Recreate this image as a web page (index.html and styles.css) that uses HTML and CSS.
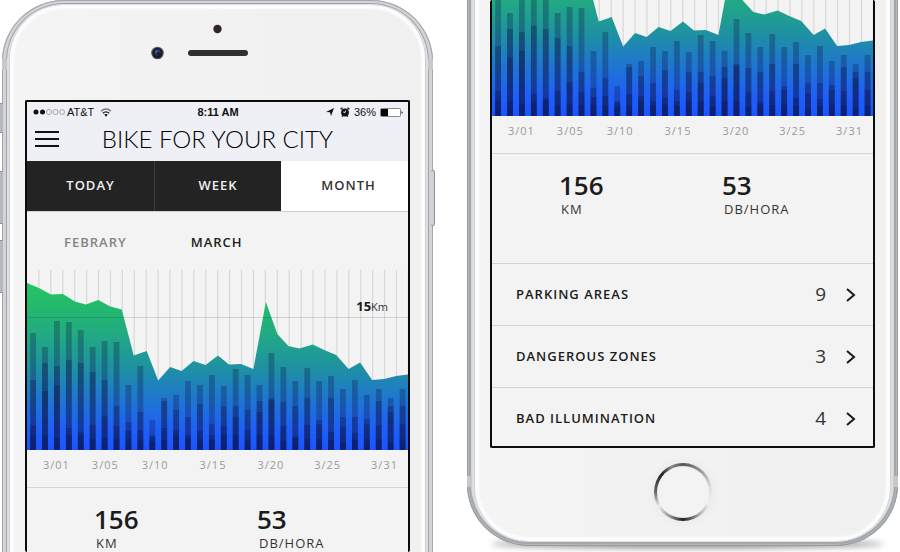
FILE: index.html
```html
<!DOCTYPE html>
<html lang="en">
<head>
<meta charset="utf-8">
<title>Bike for your city</title>
<link rel="stylesheet" href="styles.css">
</head>
<body>
<main class="stage">
  <section class="phone phone-top">
    <i class="side mute"></i><i class="side vol-up"></i><i class="side vol-down"></i><i class="side power"></i>
    <i class="antenna left"></i><i class="antenna right"></i>
    <div class="forehead">
      <svg class="sensors" viewBox="0 0 100 50" aria-hidden="true">
        <circle cx="67.500" cy="9" r="4.200" fill="#2e2726"/>
        <circle cx="7.500" cy="33" r="6.300" fill="#585a60"/>
        <circle cx="7.500" cy="33" r="5.200" fill="#191b22"/>
        <circle cx="7.500" cy="32.500" r="3" fill="#263f74"/>
        <circle cx="8.500" cy="33.500" r="1.500" fill="#11182a"/>
        <circle cx="6.500" cy="31.500" r="1" fill="#4e73ad"/>
        <rect x="38" y="30" width="60" height="6" rx="3" fill="#303031"/>
      </svg>
    </div>
    <div class="screen">
      <header class="topbar">
        <div class="status">
          <span class="carrier">
            <svg class="signal" viewBox="0 0 32 8" aria-hidden="true"><g stroke-width=".7"><circle cx="3" cy="4" r="2.500" fill="#111"/><circle cx="9.500" cy="4" r="2.500" fill="#111"/><g fill="none" stroke="#888"><circle cx="16" cy="4" r="2.500"/><circle cx="22.500" cy="4" r="2.500"/><circle cx="29" cy="4" r="2.500"/></g></g></svg>
            <span>AT&amp;T</span>
            <svg class="wifi" viewBox="0 0 12 9" aria-hidden="true"><g fill="none" stroke-width="1.300"><path d="M1 3.300Q6-1.200 11 3.300" stroke="#777"/><path d="M2.800 5.300Q6 2.400 9.200 5.300" stroke="#222"/></g><path d="M4.200 6.600Q6 5.200 7.800 6.600L6 8.700z" fill="#111"/></svg>
          </span>
          <time>8:11 AM</time>
          <span class="power-info">
            <svg class="arrow" viewBox="0 0 8 8" aria-hidden="true"><path d="M8 0L5 8 4 4.200 0 4z" fill="#111"/></svg>
            <svg class="alarm" viewBox="0 0 10 10" aria-hidden="true"><circle cx="5" cy="5.500" r="3.900" fill="#111"/><path d="M.6 2.300L2.500.7M9.400 2.300L7.500.7M2 9.600l1-1M8 9.600l-1-1" stroke="#111" stroke-width="1.300"/><path d="M5.700 3.500L4.700 5.800 3.300 5" fill="none" stroke="#fff"/></svg>
            <span>36%</span>
            <svg class="battery" viewBox="0 0 23 9" aria-hidden="true"><rect x=".5" y=".5" width="20" height="8" rx="1" fill="#fff" stroke="#888"/><rect x="1" y="1" width="7" height="7" fill="#080808"/><path d="M21.500 3v3L23 4.500z" fill="#333"/></svg>
          </span>
        </div>
        <div class="titlebar">
          <button class="menu" type="button" aria-label="Menu"><i></i><i></i><i></i></button>
          <h1>BIKE FOR YOUR CITY</h1>
        </div>
      </header>
      <nav class="tabs">
        <button type="button">TODAY</button>
        <button type="button">WEEK</button>
        <button type="button" class="active">MONTH</button>
      </nav>
      <div class="months">
        <a href="#february">FEBRARY</a>
        <a href="#march" class="current">MARCH</a>
      </div>
      <figure class="chart"><figcaption><b>15</b>Km</figcaption></figure>
      <div class="axis"><span>3/01</span><span>3/05</span><span>3/10</span><span>3/15</span><span>3/20</span><span>3/25</span><span>3/31</span></div>
      <dl class="stats">
        <div><dd>156</dd><dt>KM</dt></div>
        <div><dd>53</dd><dt>DB/HORA</dt></div>
      </dl>
    </div>
  </section>

  <section class="phone phone-bottom">
    <i class="antenna left"></i><i class="antenna right"></i>
    <div class="screen">
      <figure class="chart"></figure>
      <div class="axis"><span>3/01</span><span>3/05</span><span>3/10</span><span>3/15</span><span>3/20</span><span>3/25</span><span>3/31</span></div>
      <dl class="stats">
        <div><dd>156</dd><dt>KM</dt></div>
        <div><dd>53</dd><dt>DB/HORA</dt></div>
      </dl>
      <ul class="reports">
        <li><a href="#parking"><span>PARKING AREAS</span><b>9</b><svg viewBox="0 0 10 14" aria-hidden="true"><path d="M1 1l7 6-7 6"/></svg></a></li>
        <li><a href="#danger"><span>DANGEROUS ZONES</span><b>3</b><svg viewBox="0 0 10 14" aria-hidden="true"><path d="M1 1l7 6-7 6"/></svg></a></li>
        <li><a href="#light"><span>BAD ILLUMINATION</span><b>4</b><svg viewBox="0 0 10 14" aria-hidden="true"><path d="M1 1l7 6-7 6"/></svg></a></li>
      </ul>
    </div>
    <div class="chin"><button class="home" type="button" aria-label="Home"></button></div>
  </section>
</main>
<script src="chart.js"></script>
</body>
</html>
```
FILE: styles.css
```css
* { box-sizing: border-box; }
body {
  margin: 0;
  background: #fff;
  color: #1c1c1c;
  font-family: "Open Sans", "Noto Sans", sans-serif;
  font-size: 13px;
}
h1, dl, dd, dt, ul, figure { margin: 0; padding: 0; }
button { font: inherit; border: 0; padding: 0; background: none; color: inherit; }
a { color: inherit; text-decoration: none; }
svg { display: block; }

.stage {
  display: grid;
  grid-template-columns: 1fr 1fr;
  gap: 34px;
  height: 100vh;
  padding: 0 2px;
  overflow: hidden;
}
.phone {
  position: relative;
  isolation: isolate;
  display: flex;
  flex-direction: column;
  min-height: 0;
  padding: 0 23px;
}
/* The case runs on past the edge of the window. */
.phone::before {
  content: "";
  position: absolute;
  z-index: -1;
  left: 0;
  right: 0;
  background: linear-gradient(90deg, #f4f4f4, #f0f0f0);
}
.phone-top::before {
  top: 0;
  bottom: -100px;
  border-radius: 62px;
  box-shadow:
    inset 0 0 0 1px #a4a7ab,
    inset 0 -1px 0 4px #d2d4d8,
    inset 0 -1px 0 5px #a1a4a9,
    inset 0 -2px 0 7px #dedfe1,
    inset 0 -3px 0 8px #d0d1d3,
    inset 0 -3px 2px 12px #fcfcfc;
}
.phone-bottom {
  justify-content: flex-end;
  margin-bottom: 6px;
}
.phone-bottom::before {
  top: -100px;
  bottom: 0;
  border-radius: 62px;
  box-shadow:
    inset 0 0 0 1px #989ca1,
    inset 0 0 0 2px #b3b6ba,
    inset 0 0 0 4px #a3a8ad,
    inset 0 1px 0 5px #d4d6da,
    inset 0 2px 0 7px #dedfe1,
    inset 0 3px 0 8px #d0d1d3,
    inset 0 3px 2px 12px #fcfcfc;
}
.phone-bottom::after {
  content: "";
  position: absolute;
  z-index: -2;
  left: 24px;
  right: 14px;
  bottom: -2px;
  height: 8px;
  border-radius: 50%;
  background: #888;
  filter: blur(3px);
}
.side { position: absolute; width: 4px; background: #b4b7bc; border: 1px solid #8f9297; }
.mute, .vol-up, .vol-down { left: -3px; border-left: 0; border-right: 0; }
.mute { top: 103px; height: 30px; }
.vol-up { top: 171px; height: 53px; }
.vol-down { top: 240px; height: 53px; }
.power { right: -2px; top: 170px; height: 56px; border-radius: 2px; background: #cfd2d6; border-left: 0; }
.antenna { position: absolute; width: 5px; height: 11px; background: #c9c7c9; }
.antenna.left { left: 0; }
.antenna.right { right: 0; }
.phone-top .antenna { top: 59px; }
.phone-bottom .antenna { bottom: 59px; }

.forehead { flex: none; display: flex; justify-content: center; height: 100px; padding-top: 20px; }
.sensors { width: 100px; height: 50px; margin-right: 35px; }
.screen {
  display: flex;
  flex-direction: column;
  min-height: 0;
  border: 2px solid #0c0c0c;
  border-radius: 2px;
  background: #f3f3f3;
}
.screen > * { flex: none; }
.phone-top .screen { flex: 1; border-bottom: 0; }
.phone-bottom .screen { flex: 1; justify-content: flex-end; border-top: 0; overflow: hidden; }

.topbar { background: #efeff6; }
.status {
  display: grid;
  grid-template-columns: 1fr auto 1fr;
  align-items: center;
  height: 20px;
  padding: 0 5px 0 6px;
  font: 11px/20px "Liberation Sans", sans-serif;
  color: #111;
}
.status time { font-weight: bold; }
.carrier, .power-info { display: flex; align-items: center; gap: 3px; }
.carrier { gap: 2px; }
.wifi { margin-left: 4px; }
.power-info { justify-content: flex-end; gap: 4px; }
.signal { width: 32px; height: 8px; }
.wifi { width: 12px; height: 9px; }
.arrow { width: 8px; height: 8px; margin-right: 2px; }
.alarm { width: 10px; height: 10px; }
.battery { width: 23px; height: 9px; }
.titlebar { display: grid; grid-template-columns: 40px 1fr 40px; align-items: center; height: 39px; padding-bottom: 5px; }
.menu { display: grid; gap: 5px; width: 24px; margin-left: 8px; }
.menu i { height: 2px; background: #111; }
.titlebar h1 {
  text-align: center;
  white-space: nowrap;
  font: 300 24px/32px Lato, sans-serif;
  color: #000;
}

.tabs { display: grid; grid-template-columns: 1fr 1fr 1fr; height: 51px; border-bottom: 1px solid #d0d0d0; }
.tabs button {
  background: #232323;
  color: #f1f1f1;
  font-weight: 600;
  letter-spacing: 1px;
  padding-bottom: 2px;
}
.tabs button + button { border-left: 1px solid #3c3c3c; }
.tabs .active { background: #fff; color: #333; border-left: 0; padding-left: 8px; }

.months { display: flex; height: 57px; padding: 0 37px; gap: 64px; line-height: 60px; letter-spacing: 1px; font-weight: 600; }
.months a { color: #858585; }
.months .current { color: #222; }

.chart { position: relative; height: 181px; }
.chart svg { width: 100%; height: 100%; }
.chart figcaption { position: absolute; right: 20px; top: 28px; font-size: 11px; line-height: 18px; color: #333; }
.chart b { font-size: 13px; color: #1c1c1c; }

.axis {
  display: grid;
  grid-template-columns: 49fr 50fr 58fr 58fr 57fr 57fr 28fr;
  height: 38px;
  padding: 0 9px 0 16px;
  border-bottom: 1px solid #d5d5d5;
  font-size: 11px;
  line-height: 30px;
  letter-spacing: 1px;
  color: #9a9a9a;
}

.stats { display: grid; grid-template-columns: 163px 1fr; height: 109px; padding: 17px 0 0 67px; }
.stats div { display: flex; flex-direction: column; }
.stats dd { font-size: 26px; font-weight: 600; line-height: 28px; }
.stats dt { padding-left: 2px; line-height: 20px; color: #333; letter-spacing: 1px; }

.reports { list-style: none; }
.reports li { border-top: 1px solid #d3d3d3; padding: 20px 17px 20px 24px; }
.reports li:last-child { padding-bottom: 17px; }
.reports a { display: flex; align-items: center; line-height: 21px; font-weight: 600; letter-spacing: 1px; }
.reports span { flex: 1; }
.reports b { font-size: 19px; font-weight: 400; color: #333; letter-spacing: 0; margin-right: 20px; }
.reports svg { width: 10px; height: 14px; fill: none; stroke: #1a1a1a; stroke-width: 2; }

.chin { flex: none; display: grid; place-items: center; height: 98px; padding-bottom: 10px; }
.home {
  width: 58px;
  height: 58px;
  border: 3px solid transparent;
  border-radius: 50%;
  background:
    linear-gradient(#f3f3f3, #f3f3f3) padding-box,
    conic-gradient(#555, #aaa 50deg, #dde0df 80deg, #f0f0f0 115deg, #aaa 145deg, #222 180deg, #888 205deg, #eee 240deg, #666 270deg, #222 310deg, #888 335deg, #555) border-box;
  box-shadow: 0 0 12px rgba(0, 0, 0, .05);
}
```
FILE: chart.js
```js
// Distance per day: the outline of the area, in chart units.
const outline = [
  [0, 14], [12, 19], [24, 25.5], [36, 25], [48, 32.5], [59, 35.5], [71.5, 31], [83.5, 37.5],
  [95, 40.5], [107, 86.5], [120, 82], [131.5, 111.5], [143.5, 98], [155, 102], [167, 92],
  [179, 96], [191.5, 86.5], [202.5, 95.5], [214.5, 95], [227, 100], [239.5, 33], [251, 65],
  [262, 77], [273, 79.5], [286.5, 75.5], [298, 81], [310, 86], [322.5, 100], [334, 93.5],
  [346, 111], [358, 110], [370, 107], [382, 105.5]
];

// Stacked levels of each day's bar, from the tallest to the shortest.
const bars = [
  [116, 69, 24, 14], [102, 86, 58, 14], [128, 83, 64, 11], [127, 89, 21, 14],
  [119, 86, 17, 14], [102, 77, 24, 10], [108, 69, 33, 11], [107, 43, 23, 10],
  [64, 27, 18, 10], [83, 37, 19, 9], [29, 14, 12, 8], [51, 48, 21, 9],
  [54, 39, 19, 14], [68, 32, 14, 10], [64, 45, 18, 10], [74, 25, 14, 9],
  [63, 43, 23, 14], [80, 43, 32, 14], [74, 39, 19, 9], [64, 48, 37, 14],
  [96, 51, 49, 14], [82, 47, 23, 8], [68, 43, 13, 11], [81, 51, 24, 10],
  [68, 29, 25, 10], [73, 51, 17, 9], [60, 32, 22, 7], [69, 32, 16, 9],
  [54, 30, 25, 10], [60, 48, 24, 10], [51, 43, 37, 7], [60, 43, 25, 9]
];

const lines = bars.map((_, i) => `M${(i + 1) * 11.95} 1V181`).join("");
const area = outline.map(p => p.join(" ")).join("L");
const columns = bars.map((levels, i) =>
  levels.map(h => `<rect x="${3.2 + i * 11.95}" y="${180 - h}" width="5.8" height="${h + 1}"/>`).join("")
).join("");

document.querySelectorAll(".chart").forEach((chart, n) => {
  chart.insertAdjacentHTML("afterbegin", `
    <svg viewBox="0 0 382 181" preserveAspectRatio="none" aria-hidden="true">
      <linearGradient id="depth${n}" gradientUnits="userSpaceOnUse" x1="0" y1="14" x2="0" y2="181">
        <stop offset="0" stop-color="#24c55f"/>
        <stop offset=".28" stop-color="#22ad7e"/>
        <stop offset=".5" stop-color="#1f92a0"/>
        <stop offset=".68" stop-color="#1f78cc"/>
        <stop offset=".87" stop-color="#1f60f6"/>
        <stop offset="1" stop-color="#1b54ff"/>
      </linearGradient>
      <path d="${lines}" stroke="#d8d8d8" stroke-width="1.2"/>
      <path d="M${area}V181H0z" fill="url(#depth${n})"/>
      <path d="M0 48.500H382" stroke="#000" stroke-opacity=".14"/>
      <g fill="#0a0f3c" fill-opacity=".28">${columns}</g>
    </svg>`);
});
```
